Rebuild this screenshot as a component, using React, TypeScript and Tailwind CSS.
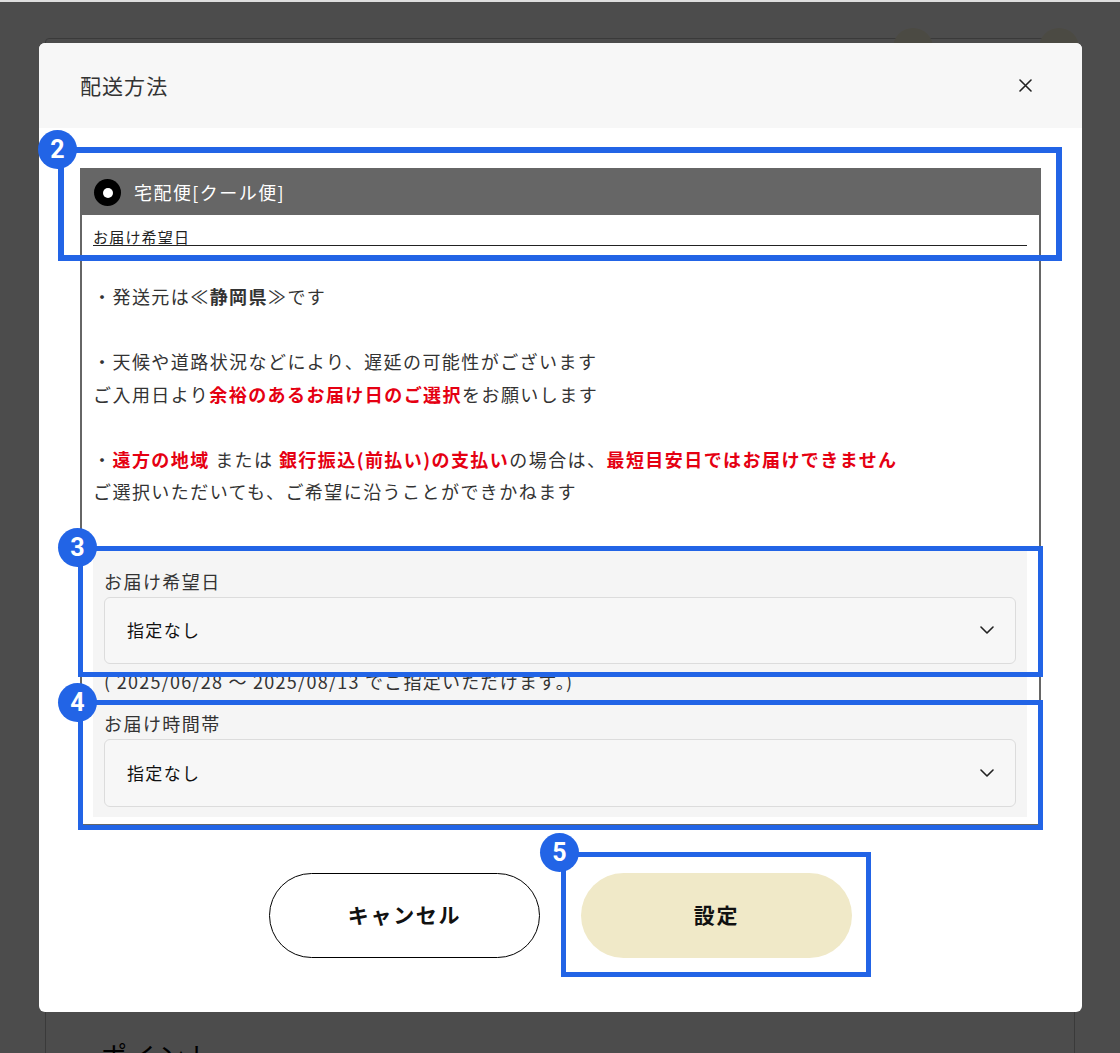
import { ReactNode } from 'react';

const blue = 'border-[#2264e6]';

function Badge({ n, className }: { n: number; className: string }) {
    return (
        <div
            className={`absolute w-[39px] h-[39px] rounded-full bg-[#2264e6] flex items-center justify-center text-white text-[25px] font-bold font-['Roboto',sans-serif] leading-none ${className}`}
        >
            {n}
        </div>
    );
}

function Red({ children }: { children: ReactNode }) {
    return <span className="text-[#e50012] font-bold">{children}</span>;
}

function Chevron() {
    return (
        <svg width="14" height="8" viewBox="0 0 14 8" fill="none">
            <path d="M1 1l6 6 6-6" stroke="#222" strokeWidth="1.6" strokeLinecap="round" strokeLinejoin="round" />
        </svg>
    );
}

function SelectBox({ label }: { label: string }) {
    return (
        <div className="h-full flex items-center justify-between rounded-[6px] border border-[#dcdcdc] bg-[#f7f7f7] pl-[22px] pr-[21px]">
            <span className="text-[17px] tracking-[0.08em] text-[#111]">{label}</span>
            <Chevron />
        </div>
    );
}

export default function App() {
    return (
        <div className="relative w-[1120px] h-[1053px] overflow-hidden bg-white font-['Noto_Sans_CJK_JP','Noto_Sans',sans-serif] text-[#333]">
            {/* 下のページ */}
            <div className="pt-[38px] px-[45px]">
                <div className="h-[1100px] border border-[#c4c4c4] rounded-t-[4px]">
                    <p className="pt-[996px] pl-[55px] text-[26px] text-black tracking-[0.1em]">ポイント</p>
                </div>
            </div>
            <div className="absolute left-[893px] top-[28px] w-[40px] h-[40px] rounded-full bg-[#fbf7df]" />
            <div className="absolute left-[1039px] top-[28px] w-[40px] h-[40px] rounded-full bg-[#fbf7df]" />

            {/* オーバーレイ */}
            <div className="absolute inset-0 bg-black/70" />
            <div className="absolute top-0 left-0 right-0 h-[2px] bg-[#dedede]" />

            {/* モーダル */}
            <div className="absolute left-[39px] top-[43px] w-[1043px] h-[969px] rounded-[6px] bg-white overflow-hidden flex flex-col">
                <div className="h-[85px] shrink-0 bg-[#f7f7f7] flex items-center justify-between pl-[41px] pr-[50px]">
                    <h2 className="text-[21px] tracking-[0.05em] text-[#333]">配送方法</h2>
                    <svg width="13" height="13" viewBox="0 0 13 13" fill="none">
                        <path d="M1 1l11 11M12 1L1 12" stroke="#222" strokeWidth="1.6" strokeLinecap="round" />
                    </svg>
                </div>

                <div className="px-[41px] pt-[40px]">
                    <div className="border-2 border-[#666]">
                        {/* ラジオ */}
                        <div className="h-[45px] bg-[#666] flex items-center pl-[12px] gap-[13px]">
                            <span className="w-[27px] h-[27px] rounded-full bg-black flex items-center justify-center">
                                <span className="w-[10px] h-[10px] rounded-full bg-white" />
                            </span>
                            <span className="text-white text-[18px] tracking-[0.08em]">宅配便[クール便]</span>
                        </div>

                        <div className="pl-[11px] pr-[12px] pb-[7px]">
                            <div className="pt-[13px] border-b border-[#222] text-[15px] leading-[17px] tracking-[0.08em] text-[#222]">
                                お届け希望日
                            </div>

                            {/* 注意書き */}
                            <div className="mt-[34px] text-[18px] leading-[32.5px] tracking-[0.08em]">
                                <p>
                                    ・発送元は≪<span className="font-bold">静岡県</span>≫です
                                </p>
                                <p className="mt-[32.5px]">・天候や道路状況などにより、遅延の可能性がございます</p>
                                <p>
                                    ご入用日より<Red>余裕のあるお届け日のご選択</Red>をお願いします
                                </p>
                                <p className="mt-[32.5px]">
                                    ・<Red>遠方の地域</Red> または <Red>銀行振込(前払い)の支払い</Red>の場合は、
                                    <Red>最短目安日ではお届けできません</Red>
                                </p>
                                <p>ご選択いただいても、ご希望に沿うことができかねます</p>
                            </div>

                            {/* 日時指定 */}
                            <div className="mt-[43px] bg-[#f5f5f5] px-[11px] pt-[18px] pb-[10px]">
                                <p className="text-[18px] leading-[24px] tracking-[0.08em]">お届け希望日</p>
                                <div className="mt-[4px] h-[67px]">
                                    <SelectBox label="指定なし" />
                                </div>
                                <p className="mt-[7px] text-[18px] leading-[20px] tracking-[0.07em]">
                                    ( 2025/06/28 〜 2025/08/13 でご指定いただけます。)
                                </p>
                                <p className="mt-[20px] text-[18px] leading-[24px] tracking-[0.08em]">お届け時間帯</p>
                                <div className="mt-[4px] h-[68px]">
                                    <SelectBox label="指定なし" />
                                </div>
                            </div>
                        </div>
                    </div>
                </div>

                {/* ボタン */}
                <div className="mt-[47px] flex justify-center gap-[41px]">
                    <button className="w-[271px] h-[85px] rounded-full border border-black bg-white text-[21px] font-bold tracking-[0.08em] text-[#111]">
                        キャンセル
                    </button>
                    <button className="w-[271px] h-[85px] rounded-full bg-[#f0e9c8] text-[21px] font-bold tracking-[0.08em] text-[#111]">
                        設定
                    </button>
                </div>
            </div>

            {/* 注釈 */}
            <div className={`absolute left-[58px] top-[147px] w-[1004px] h-[114px] border-[6px] ${blue}`} />
            <div className={`absolute left-[78px] top-[546px] w-[965px] h-[131px] border-[5px] ${blue}`} />
            <div className={`absolute left-[78px] top-[700px] w-[965px] h-[130px] border-[5px] ${blue}`} />
            <div className={`absolute left-[561px] top-[852px] w-[310px] h-[125px] border-[5px] ${blue}`} />
            <Badge n={2} className="left-[38px] top-[130px]" />
            <Badge n={3} className="left-[58px] top-[528px]" />
            <Badge n={4} className="left-[58px] top-[683px]" />
            <Badge n={5} className="left-[540px] top-[833px]" />
        </div>
    );
}
